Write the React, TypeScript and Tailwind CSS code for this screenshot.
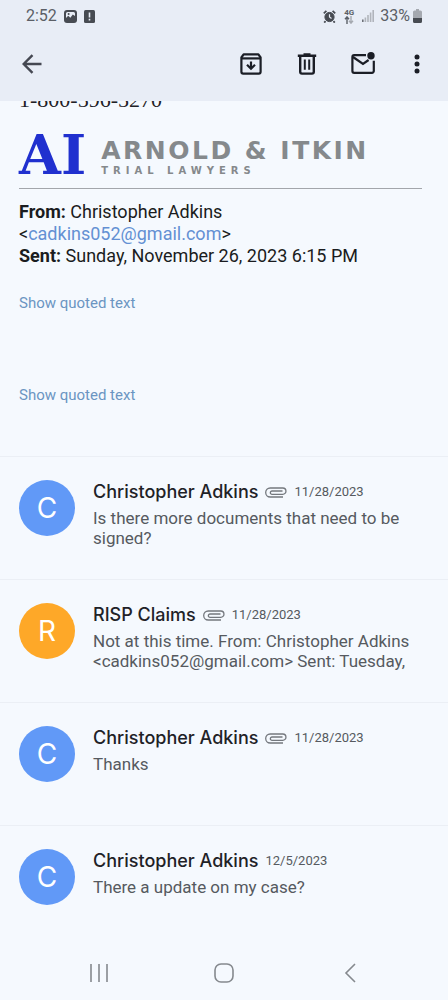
import React from 'react'

interface Message {
  id: string
  sender: string
  initial: string
  color: string
  date: string
  snippet: string
  hasAttachment: boolean
}

const messages: Message[] = [
  {
    id: '1',
    sender: 'Christopher Adkins',
    initial: 'C',
    color: 'bg-[#6199f7]',
    date: '11/28/2023',
    snippet: 'Is there more documents that need to be signed?',
    hasAttachment: true
  },
  {
    id: '2',
    sender: 'RISP Claims',
    initial: 'R',
    color: 'bg-[#fea828]',
    date: '11/28/2023',
    snippet: 'Not at this time. From: Christopher Adkins <cadkins052@gmail.com> Sent: Tuesday,',
    hasAttachment: true
  },
  {
    id: '3',
    sender: 'Christopher Adkins',
    initial: 'C',
    color: 'bg-[#6199f7]',
    date: '11/28/2023',
    snippet: 'Thanks',
    hasAttachment: true
  },
  {
    id: '4',
    sender: 'Christopher Adkins',
    initial: 'C',
    color: 'bg-[#6199f7]',
    date: '12/5/2023',
    snippet: 'There a update on my case?',
    hasAttachment: false
  }
]

function StatusBar() {
  return (
    <div className="flex h-7 items-center justify-between pt-1 pr-[26px] pl-[26px] text-base leading-5 text-[#5b5f66]">
      <div className="flex items-center gap-[7px]">
        <span>2:52</span>
        <svg className="h-[13px] w-[13px]" viewBox="0 0 13 13">
          <rect width="13" height="13" rx="3" fill="#474b52" />
          <path d="M2 3.5a1.5 1.5 0 0 1 1.5-1.5h6A1.5 1.5 0 0 1 11 3.5V6L8.8 4.4 6.4 7.8 4.2 5.8 2 8z" fill="#e8edf6" />
          <circle cx="4.6" cy="3.9" r="1" fill="#474b52" />
        </svg>
        <svg className="h-[13px] w-[11px]" viewBox="0 0 11 13">
          <rect width="11" height="13" rx="1.5" fill="#474b52" />
          <path d="M4.7 2.5h1.6v5H4.7zM4.7 8.8h1.6v1.7H4.7z" fill="#e8edf6" />
        </svg>
      </div>
      <div className="flex items-center">
        <svg className="mr-2 h-[13px] w-[13px]" viewBox="0 0 13 13" fill="none" stroke="#474b52">
          <circle cx="6.5" cy="7" r="4.6" fill="#474b52" />
          <path d="M.8 3.3 3.4.9M12.2 3.3 9.6.9M2.6 11.2 1.2 12.6M10.4 11.2l1.4 1.4" strokeWidth="1.8" />
          <path d="M6.5 4.3V7l2 1.4" stroke="#e8edf6" strokeWidth="1.2" />
        </svg>
        <div className="mr-2 flex flex-col items-center">
          <span className="text-[8px] leading-[7px] font-bold">4G</span>
          <svg className="h-2 w-[10px]" viewBox="0 0 10 8" fill="none" strokeWidth="1.4">
            <path d="M3 8V1M1 3.2 3 .9l2 2.3" stroke="#5b5f66" />
            <path d="M7 0v7M5 4.8 7 7.1l2-2.3" stroke="#a5a9b0" />
          </svg>
        </div>
        <svg className="mr-[6px] h-3 w-3" viewBox="0 0 12 12">
          <path d="M0 9.5h1.6V12H0z" fill="#6c7077" />
          <path d="M2.6 7.5h1.6V12H2.6zM5.2 5h1.6v7H5.2zM7.8 2.5h1.6V12H7.8zM10.4 0H12v12h-1.6z" fill="#b0b4bb" />
        </svg>
        <span>33%</span>
        <svg className="ml-[3px] h-[14px] w-[9px]" viewBox="0 0 9 14">
          <path d="M3 0h3v1.5h1.5A1.5 1.5 0 0 1 9 3v6H0V3a1.5 1.5 0 0 1 1.5-1.5H3z" fill="#a5a9b0" />
          <path d="M0 9h9v3.5A1.5 1.5 0 0 1 7.5 14h-6A1.5 1.5 0 0 1 0 12.5z" fill="#474b52" />
        </svg>
      </div>
    </div>
  )
}

function Toolbar() {
  return (
    <div className="flex h-[73px] items-center justify-between pr-[19px] pb-px pl-[18px] text-[#1b1e26]">
      <button type="button" aria-label="Back" className="flex h-7 w-7 items-center justify-center text-[#454852]">
        <svg className="h-7 w-7" viewBox="0 0 28 28" fill="none" stroke="currentColor" strokeWidth="2.4">
          <path d="M23.5 14H6M14.5 5.2 5.7 14l8.8 8.8" />
        </svg>
      </button>
      <div className="flex items-center gap-7">
        <button type="button" aria-label="Archive" className="h-7 w-7">
          <svg className="h-7 w-7" viewBox="0 0 28 28" fill="none" stroke="currentColor" strokeWidth="2.2">
            <path d="M4.4 7.5 6.6 4.4h14.8l2.2 3.1v14.3a1.8 1.8 0 0 1-1.8 1.8H6.2a1.8 1.8 0 0 1-1.8-1.8z" strokeLinejoin="round" />
            <path d="M4.4 8.4h19.2" />
            <path d="M14 11.5v6.2M10 14.8l4 4 4-4" />
          </svg>
        </button>
        <button type="button" aria-label="Delete" className="h-7 w-7">
          <svg className="h-7 w-7" viewBox="0 0 28 28" fill="none" stroke="currentColor" strokeWidth="2.4">
            <path d="M4.8 5.7h18.4M10.5 4.4h7" />
            <path d="M7.2 6v15.8A1.8 1.8 0 0 0 9 23.6h10a1.8 1.8 0 0 0 1.8-1.8V6" />
            <path d="M11.8 9.5v10.2M16.2 9.5v10.2" strokeWidth="2" />
          </svg>
        </button>
        <button type="button" aria-label="Mark as unread" className="h-7 w-7">
          <svg className="h-7 w-7" viewBox="0 0 28 28" fill="none" stroke="currentColor" strokeWidth="2.2">
            <path d="M17 5.2H5.2a1.8 1.8 0 0 0-1.8 1.8v14a1.8 1.8 0 0 0 1.8 1.8h17.8a1.8 1.8 0 0 0 1.8-1.8V10.8" />
            <path d="m4 7 10 6.8 5.6-3.8" />
            <circle cx="22" cy="5.8" r="3.7" fill="currentColor" stroke="none" />
          </svg>
        </button>
        <button type="button" aria-label="More options" className="h-7 w-6">
          <svg className="h-7 w-6" viewBox="0 0 24 28" fill="currentColor">
            <circle cx="12" cy="7" r="2.5" />
            <circle cx="12" cy="14" r="2.5" />
            <circle cx="12" cy="21" r="2.5" />
          </svg>
        </button>
      </div>
    </div>
  )
}

function FirmLogo() {
  return (
    <div className="flex items-start gap-[15px]">
      <span className="font-['DejaVu_Serif','Liberation_Serif',serif] text-[54px] leading-10 font-bold text-[#2030cf]">AI</span>
      <div className="pt-0.5 font-['DejaVu_Sans',sans-serif] font-bold whitespace-nowrap text-[#85898c]">
        <p className="text-[25px] leading-7 tracking-widest">ARNOLD &amp; ITKIN</p>
        <p className="text-[10px] leading-3 tracking-[0.5em]">TRIAL LAWYERS</p>
      </div>
    </div>
  )
}

function Paperclip() {
  return (
    <svg className="h-[11px] w-[22px] shrink-0" viewBox="0 0 22 11" fill="none" stroke="#74787e" strokeWidth="1.3">
      <path d="M18 10H5.2a4.5 4.5 0 0 1 0-9h12.6a3.1 3.1 0 0 1 0 6.3H7a1.6 1.6 0 0 1 0-3.3h10.5" />
    </svg>
  )
}

function MessageRow({ message }: { message: Message }) {
  return (
    <li className="flex h-[123px] gap-[18px] border-t border-[#ebeff5] pt-[23px] pr-8 pl-[19px]">
      <div className={`flex h-14 w-14 shrink-0 items-center justify-center rounded-full font-[Inter,sans-serif] text-[28px] text-white ${message.color}`}>
        {message.initial}
      </div>
      <div className="min-w-0 flex-1">
        <div className="flex items-center gap-[7px]">
          <h3 className="font-[Inter,sans-serif] text-lg leading-6 font-medium text-[#1f2227]">{message.sender}</h3>
          {message.hasAttachment && <Paperclip />}
          <span className="text-[13px] leading-6 text-[#565a60]">{message.date}</span>
        </div>
        <p className="mt-1 text-[17px] leading-5 text-[#565a60]">{message.snippet}</p>
      </div>
    </li>
  )
}

function NavigationBar() {
  return (
    <nav className="flex h-[52px] items-center px-9 pb-0.5 text-[#85898e]">
      <button type="button" aria-label="Recent apps" className="flex flex-1 justify-center">
        <svg className="h-5 w-5" viewBox="0 0 20 20" fill="none" stroke="currentColor" strokeWidth="1.6">
          <path d="M2 1v18M10 1v18M18 1v18" />
        </svg>
      </button>
      <button type="button" aria-label="Home" className="flex flex-1 justify-center">
        <svg className="h-5 w-5" viewBox="0 0 20 20" fill="none" stroke="currentColor" strokeWidth="1.6">
          <rect x="1" y="1" width="18" height="18" rx="6" />
        </svg>
      </button>
      <button type="button" aria-label="Back" className="flex flex-1 justify-center">
        <svg className="h-5 w-5" viewBox="0 0 20 20" fill="none" stroke="currentColor" strokeWidth="1.6">
          <path d="m16 1-9 9 9 9" />
        </svg>
      </button>
    </nav>
  )
}

export default function App() {
  return (
    <div className="flex min-h-screen flex-col bg-[#f5f9fe] font-[Roboto,sans-serif]">
      <header className="bg-[#e8edf6]">
        <StatusBar />
        <Toolbar />
      </header>

      <main className="flex-1">
        <section className="pr-[26px] pl-[19px]">
          {/* Phone number, scrolled partly under the header */}
          <div className="flex h-[7px] flex-col justify-end overflow-hidden">
            <p className="font-['Liberation_Serif',serif] text-[22px] leading-4 text-[#1f2227]">1-800-596-5270</p>
          </div>
          <div className="border-b border-[#a3a6ab] pt-[27px] pb-[11px]">
            <FirmLogo />
          </div>
          <div className="pt-3 text-lg leading-[22px] text-[#1a1c20]">
            <p><b>From:</b> Christopher Adkins</p>
            <p>&lt;<a href="mailto:cadkins052@gmail.com" className="text-[#6390d3]">cadkins052@gmail.com</a>&gt;</p>
            <p><b>Sent:</b> Sunday, November 26, 2023 6:15 PM</p>
          </div>
          <div className="flex flex-col items-start gap-[72px] pt-[26px] pb-[51px] text-[15px] leading-5 text-[#6b95c2]">
            <button type="button">Show quoted text</button>
            <button type="button">Show quoted text</button>
          </div>
        </section>

        <ul>
          {messages.map((message) => (
            <MessageRow key={message.id} message={message} />
          ))}
        </ul>
      </main>

      <NavigationBar />
    </div>
  )
}
